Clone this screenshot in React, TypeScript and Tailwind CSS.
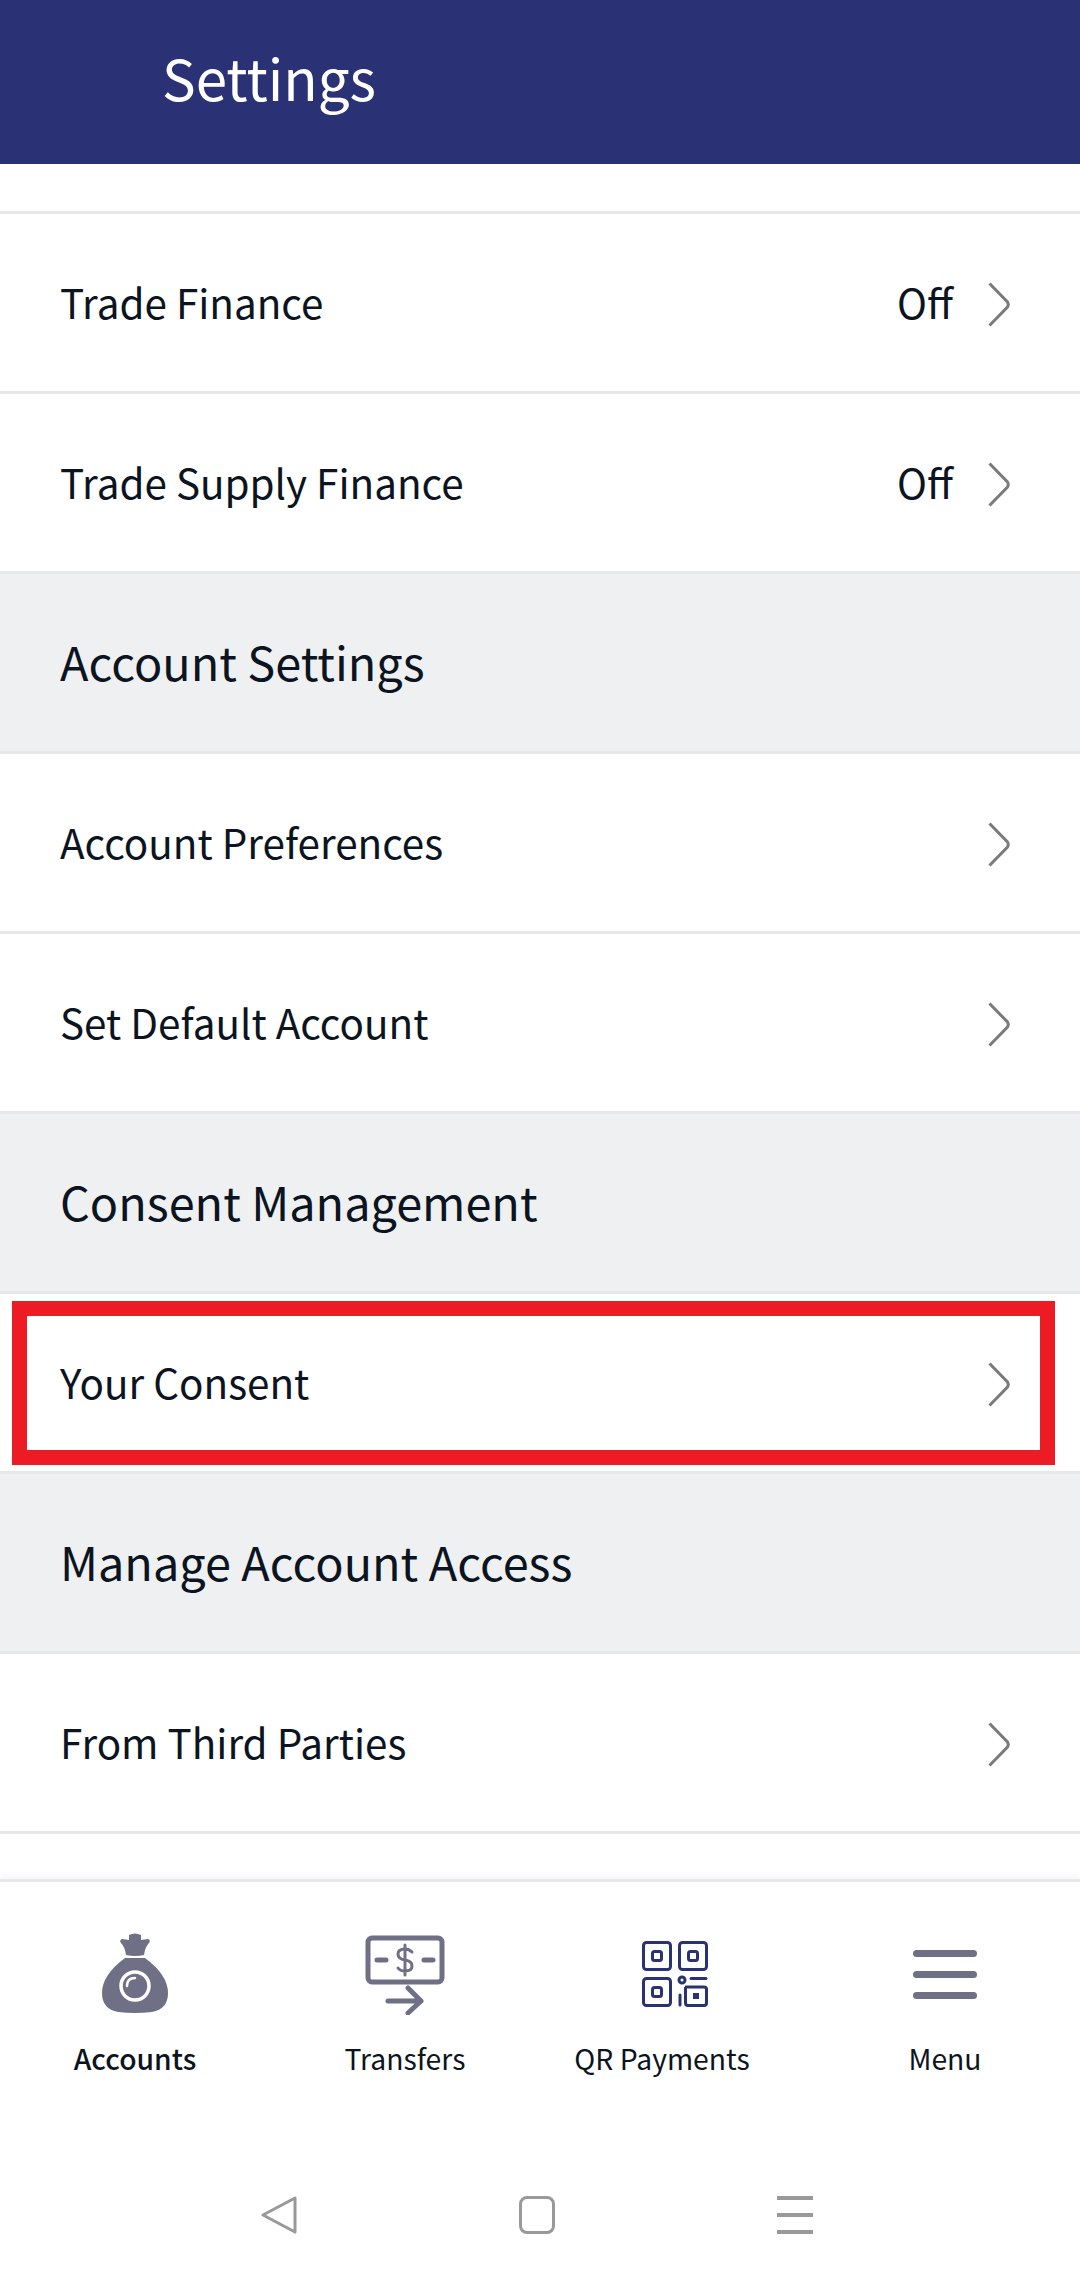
const Chevron = () => (
  <svg width="22" height="45" viewBox="0 0 22 45" fill="none" className="shrink-0 mt-[3px]">
    <path d="M1.5 1.5 L19.5 20 Q21 22.5 19.5 25 L1.5 43.5" stroke="#7a7a7a" strokeWidth="3" />
  </svg>
);

const Row = ({ label, value }: { label: string; value?: string }) => (
  <div className="h-[180px] flex items-center justify-between pl-[60px] pr-[70px] border-b-[3px] border-[#e6e8eb] bg-white">
    <span className="text-[40.4px] leading-[56px] -mt-[2px] text-[#0b1420]">{label}</span>
    <div className="flex items-center gap-[35px]">
      {value && <span className="text-[40.4px] leading-[56px] -mt-[2px] text-[#0b1420]">{value}</span>}
      <Chevron />
    </div>
  </div>
);

const Section = ({ label }: { label: string }) => (
  <div className="h-[180px] flex items-center pl-[60px] border-b-[3px] border-[#e6e8eb] bg-[#eff0f1]">
    <span className="text-[46.8px] leading-[64px] -mt-[4px] text-[#0b1420]">{label}</span>
  </div>
);

const BagIcon = () => (
  <svg width="66" height="80" viewBox="0 0 66 80">
    <path
      d="M27 2 Q33 -1 39 2 L39 7 L46 6 Q49 7 47 10 Q43 14 42 22 Q33 24 24 22 Q23 14 19 10 Q17 7 20 6 L27 7 Z"
      fill="#6f7086"
    />
    <path
      d="M23 25 L43 25 Q66 42 66 60 Q66 76 50 79 Q33 81 16 79 Q0 76 0 60 Q0 42 23 25 Z"
      fill="#6f7086"
    />
    <circle cx="33" cy="53" r="14" fill="none" stroke="#fff" strokeWidth="3.5" />
    <path d="M25 53 Q25 45 33 45" fill="none" stroke="#fff" strokeWidth="2.5" strokeLinecap="round" />
  </svg>
);

const TransferIcon = () => (
  <svg width="80" height="80" viewBox="0 0 80 80" fill="none" stroke="#6f7086" strokeLinecap="round" strokeLinejoin="round" className="mt-[3px]">
    <rect x="3" y="3" width="74" height="44" rx="4" strokeWidth="5" />
    <path d="M12 25 H21 M59 25 H68" strokeWidth="5" />
    <path d="M47 17 Q44 14 40 14 Q33 14 33 19 Q33 24 40 25 Q47 26 47 31 Q47 36 40 36 Q35 36 33 33 M40 10 V40" strokeWidth="3" />
    <path d="M23 66 H56 M43 53 L56 66 L43 78" strokeWidth="5" />
  </svg>
);

const QrIcon = () => (
  <svg width="66" height="66" viewBox="0 0 66 66" fill="none" stroke="#2a3275" strokeWidth="3" className="mt-[2px]">
    <rect x="1.5" y="1.5" width="27" height="27" rx="3" />
    <rect x="37.5" y="1.5" width="27" height="27" rx="3" />
    <rect x="1.5" y="37.5" width="27" height="27" rx="3" />
    <rect x="10.5" y="10.5" width="9" height="9" rx="2" />
    <rect x="46.5" y="10.5" width="9" height="9" rx="2" />
    <rect x="10.5" y="46.5" width="9" height="9" rx="2" />
    <circle cx="40" cy="39" r="3" />
    <path d="M49 37.5 H64" strokeLinecap="round" />
    <path d="M43 46 H62 Q64.5 46 64.5 48 V62 Q64.5 64.5 62 64.5 H46 Q43.5 64.5 43.5 62 V46" />
    <rect x="51" y="52" width="6" height="6" fill="#2a3275" stroke="none" />
    <path d="M38 54 V64" strokeLinecap="round" />
  </svg>
);

const MenuIcon = () => (
  <div className="flex flex-col gap-[14px] w-[64px] mt-[2px]">
    <div className="h-[7px] rounded-full bg-[#6f7086]" />
    <div className="h-[7px] rounded-full bg-[#6f7086]" />
    <div className="h-[7px] rounded-full bg-[#6f7086]" />
  </div>
);

const NavItem = ({ icon, label, active, shift }: { icon: React.ReactNode; label: string; active?: boolean; shift?: boolean }) => (
  <div className="flex-1 flex flex-col items-center">
    <div className="h-[82px] flex items-center justify-center">{icon}</div>
    <span
      className={`mt-[22px] text-[28.3px] leading-[44px] whitespace-nowrap text-[#0b1420] ${active ? 'font-medium' : ''} ${shift ? '-translate-x-[13px]' : ''}`}
    >
      {label}
    </span>
  </div>
);

export default function App() {
  return (
    <div
      className="relative w-[1080px] h-[2281px] overflow-hidden bg-white flex flex-col"
      style={{ fontFamily: '"Noto Sans CJK SC", "Noto Sans", sans-serif' }}
    >
      <header className="h-[164px] shrink-0 bg-[#2a3275] flex items-center pl-[162px]">
        <h1 className="text-[56.5px] leading-[80px] -mt-[12px] text-white font-normal">Settings</h1>
      </header>

      <main className="flex-1 overflow-hidden">
        <div className="h-[50px] border-b-[3px] border-[#e6e8eb]" />
        <Row label="Trade Finance" value="Off" />
        <Row label="Trade Supply Finance" value="Off" />
        <Section label="Account Settings" />
        <Row label="Account Preferences" />
        <Row label="Set Default Account" />
        <Section label="Consent Management" />
        <Row label="Your Consent" />
        <Section label="Manage Account Access" />
        <Row label="From Third Parties" />
      </main>

      <div className="absolute left-[12px] top-[1301px] w-[1043px] h-[164px] border-[15px] border-[#ed1c24]" />

      <nav className="h-[402px] shrink-0 border-t-[3px] border-[#e6e8eb] bg-white flex flex-col shadow-[0_-4px_6px_rgba(0,0,0,0.03)]">
        <div className="flex pt-[50px]">
          <NavItem icon={<BagIcon />} label="Accounts" active />
          <NavItem icon={<TransferIcon />} label="Transfers" />
          <NavItem icon={<QrIcon />} label="QR Payments" shift />
          <NavItem icon={<MenuIcon />} label="Menu" />
        </div>
        <div className="mt-[116px] flex justify-center gap-[222px] pr-[6px]">
          <svg width="36" height="38" viewBox="0 0 36 38" fill="none" stroke="#999" strokeWidth="3" strokeLinejoin="round">
            <path d="M34 2 L2 19 L34 36 Z" />
          </svg>
          <div className="w-[36px] h-[38px] rounded-[8px] border-[3px] border-[#999]" />
          <div className="flex flex-col justify-between w-[36px] h-[38px]">
            <div className="h-[4px] bg-[#999]" />
            <div className="h-[4px] bg-[#999]" />
            <div className="h-[4px] bg-[#999]" />
          </div>
        </div>
      </nav>
    </div>
  );
}
